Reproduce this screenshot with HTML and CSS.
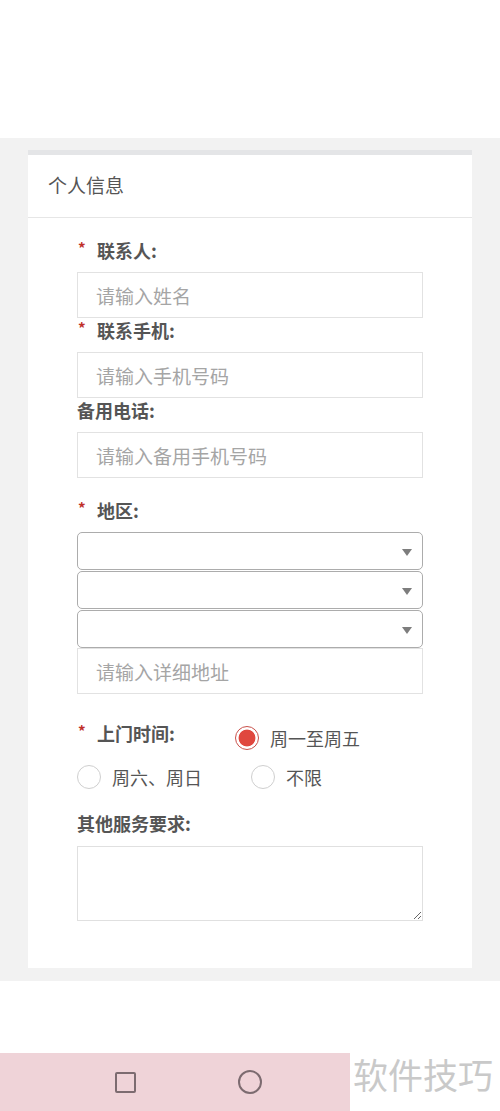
FILE: index.html
```html
<!DOCTYPE html>
<html lang="zh-CN">
<head>
<meta charset="utf-8">
<title>个人信息</title>
<link rel="stylesheet" href="styles.css">
</head>
<body>
<div class="top-space"></div>
<main class="page">
  <section class="card">
    <div class="card-head">个人信息</div>
    <form class="form">
      <div class="label req first"><span class="star">*</span>联系人:</div>
      <input class="input" type="text" placeholder="请输入姓名">

      <div class="label req"><span class="star">*</span>联系手机:</div>
      <input class="input" type="text" placeholder="请输入手机号码">

      <div class="label">备用电话:</div>
      <input class="input" type="text" placeholder="请输入备用手机号码">

      <div class="label req area"><span class="star">*</span>地区:</div>
      <div class="select"><span class="caret"></span></div>
      <div class="select"><span class="caret"></span></div>
      <div class="select last"><span class="caret"></span></div>
      <input class="input" type="text" placeholder="请输入详细地址">

      <div class="time-row">
        <div class="label req time-label"><span class="star">*</span>上门时间:</div>
        <div class="option raised"><span class="radio checked"></span><span class="opt-text">周一至周五</span></div>
      </div>
      <div class="time-row second">
        <div class="option wide"><span class="radio"></span><span class="opt-text">周六、周日</span></div>
        <div class="option"><span class="radio"></span><span class="opt-text">不限</span></div>
      </div>

      <div class="label other">其他服务要求:</div>
      <textarea class="textarea"></textarea>
    </form>
  </section>
</main>
<div class="bottom-space"></div>
<footer class="navbar">
  <div class="nav-keys">
    <span class="key-square"></span>
    <span class="key-circle"></span>
  </div>
  <div class="watermark">软件技巧</div>
</footer>
</body>
</html>
```
FILE: styles.css
```css
* { box-sizing: border-box; }
html, body { margin: 0; padding: 0; }
body {
  width: 500px;
  height: 1111px;
  overflow: hidden;
  background: #fff;
  font-family: "Noto Sans CJK SC", "Noto Sans", sans-serif;
  color: #555;
}
.top-space { height: 138px; background: #fff; }
.page {
  background: #f2f2f2;
  padding: 12px 28px 13px;
}
.card {
  background: #fff;
  border-top: 5px solid #e4e5e7;
}
.card-head {
  height: 63px;
  padding-left: 20px;
  font-size: 19px;
  line-height: 60px;
  color: #555;
  border-bottom: 1px solid #e6e6e6;
}
.form {
  display: flex;
  flex-direction: column;
  padding: 22px 48px 47px 49px;
}
.label {
  display: flex;
  align-items: flex-start;
  font-size: 18px;
  font-weight: 700;
  line-height: 21px;
  height: 24px;
  color: #555;
  margin-top: 2px;
  margin-bottom: 8px;
}
.label.first { margin-top: 0; }
.star {
  width: 20px;
  flex: none;
  color: #c0302a;
  font-size: 15px;
  font-weight: 700;
  padding-left: 1px;
  line-height: 16px;
}
.label.area { margin-top: 22px; }
.input {
  display: block;
  width: 346px;
  height: 46px;
  margin: 0;
  border: 1px solid #e2e2e2;
  border-radius: 0;
  padding: 0 0 0 18px;
  font-family: inherit;
  font-size: 19px;
  color: #555;
  background: #fff;
  outline: none;
}
.input::placeholder { color: #a5a5a5; }
.select {
  display: flex;
  align-items: center;
  justify-content: flex-end;
  width: 346px;
  height: 38px;
  margin-bottom: 1px;
  border: 1.5px solid #acacac;
  border-radius: 5px;
  padding-right: 10px;
  background: #fff;
}
.select.last { margin-bottom: 0; }
.caret {
  width: 0;
  height: 0;
  margin-top: 2px;
  border-left: 5px solid transparent;
  border-right: 5px solid transparent;
  border-top: 7px solid #7d7d7d;
}
.time-row {
  display: flex;
  align-items: flex-start;
  margin-top: 29px;
}
.time-row.second { margin-top: 15px; }
.time-label {
  width: 158px;
  flex: none;
  margin: 0;
}
.option {
  display: flex;
  align-items: center;
  height: 24px;
}
.option.raised { margin-top: 3px; }
.option.wide { width: 174px; flex: none; }
.radio {
  width: 24px;
  height: 24px;
  flex: none;
  border-radius: 50%;
  border: 1.5px solid #cfcfcf;
  background: #fff;
  margin-right: 11px;
}
.radio.checked {
  border: 1.5px solid #c9504a;
  background: radial-gradient(circle, #e0473e 0, #e0473e 8px, #fff 8.8px, #fff 100%);
}
.opt-text {
  font-size: 18px;
  line-height: 22px;
  color: #555;
}
.label.other { margin-top: 24px; margin-bottom: 9px; }
.textarea {
  display: block;
  width: 346px;
  height: 75px;
  margin: 0;
  border: 1.5px solid #e0e0e0;
  border-radius: 0;
  font-family: inherit;
  font-size: 16px;
  resize: vertical;
  background: #fff;
  outline: none;
}
.bottom-space { height: 72px; background: #fff; }
.navbar {
  display: flex;
  height: 58px;
  background: #fff;
}
.nav-keys {
  width: 350px;
  flex: none;
  display: flex;
  align-items: center;
  background: #efd3d8;
  padding-left: 115px;
}
.key-square {
  width: 21px;
  height: 21px;
  border: 2px solid #7c6b70;
  border-radius: 2px;
}
.key-circle {
  width: 24px;
  height: 24px;
  margin-left: 102px;
  border: 2px solid #7c6b70;
  border-radius: 50%;
}
.watermark {
  padding-left: 3px;
  font-size: 35px;
  line-height: 42px;
  color: #c9c9c9;
  white-space: nowrap;
}
```
